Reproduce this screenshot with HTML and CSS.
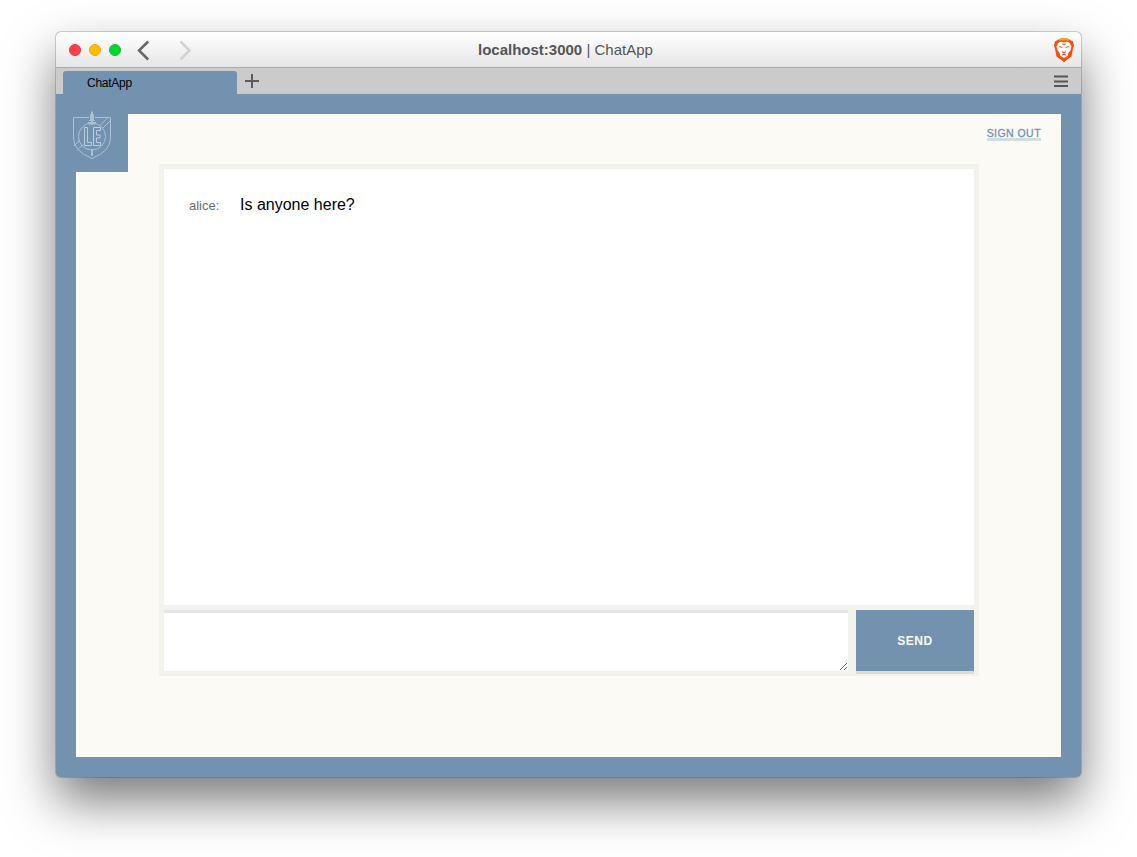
FILE: index.html
```html
<!DOCTYPE html>
<html lang="en">
<head>
<meta charset="utf-8">
<title>ChatApp</title>
<link rel="stylesheet" href="styles.css">
</head>
<body>
<div class="window">
  <header class="titlebar">
    <div class="controls">
      <span class="dot red"></span><span class="dot yellow"></span><span class="dot green"></span>
      <svg class="nav" width="60" height="24" viewBox="0 0 60 24" fill="none" stroke-width="2.5"><path d="M14.200 3.500 5 12.500l9.200 9" stroke="#666"/><path d="m46.500 3.500 9 9-9 9" stroke="#d2d2d2"/></svg>
    </div>
    <div class="address"><b>localhost:3000</b> | ChatApp</div>
    <svg class="brave" width="20" height="24" viewBox="0 0 20 24">
      <path d="M5.500 1h9L19 3.500l1 4-1 3-1.500 8L10 24l-7.500-5.500-1.500-8-1-3 1-4z" fill="#fb4c10"/>
      <path d="M6.500 0h7l2 2.500h-11z" fill="#eea335"/>
      <path d="m4.500 4.500 2.700-.8 2.800.8 2.800-.8 2.700.8 2 4-1 3.800-2 2.500-.8 3L10 20l-3.700-2.200-.8-3-2-2.500-1-3.800z" fill="#fff"/>
      <path d="m5 8.500 3.500 1M15 8.500l-3.500 1M8 13.500l2 1.300 2-1.300M8.300 5.800l1.700.8 1.700-.8M8 17l2-.8 2 .8" fill="none" stroke="#fb5b24" stroke-width="1.100"/>
    </svg>
  </header>
  <nav class="tabs">
    <div class="tab">ChatApp</div>
    <svg class="plus" width="14" height="14" viewBox="0 0 14 14"><path d="M7 0v14M0 7h14" stroke="#5c5c5c" stroke-width="2"/></svg>
    <svg class="menu" width="14" height="12" viewBox="0 0 14 12"><path d="M0 1.500h14M0 6.500h14M0 11h14" stroke="#555" stroke-width="2"/></svg>
  </nav>
  <main class="page">
    <div class="panel">
      <div class="chat">
        <div class="messages"><span class="author">alice:</span><span class="text">Is anyone here?</span></div>
        <form class="composer"><textarea class="input" aria-label="Message"></textarea><button class="send" type="button">SEND</button></form>
      </div>
      <a class="signout">SIGN OUT</a>
      <div class="logo">
        <svg width="40" height="50" viewBox="0 0 40 50" fill="none" stroke="#a9c1d3" stroke-width="1">
          <path d="M17 7.500H1.500V28q0 13 18.500 20.500Q38.500 41 38.500 28V7.500H23"/>
          <circle cx="20" cy="26.500" r="13.500"/>
          <path d="m28 15.500 8-8M31 18l7.500-7.500M2 36l6-6M5 40.500l6-6"/>
          <path d="M18.500 10V4.500h3V10M16 12.500h8M17 10.500h6M19.500 1.500h1M18.500 13l-1 2.500M21.500 13l1 2.500"/>
          <path d="M20 2v13M20 39v7" stroke-width="2"/>
          <path d="M12.500 17.500h3v15h4v3h-7zM21.500 17.500h7v3h-4v4.500h3.500v3h-3.500v4.500h4v3h-7z" stroke="#b9cedc"/>
        </svg>
      </div>
    </div>
  </main>
</div>
</body>
</html>
```
FILE: styles.css
```css
* { box-sizing: border-box; }
body {
  margin: 0;
  height: 857px;
  padding: 32px 56px 80px;
  overflow: hidden;
  background: #fff;
  font-family: "Liberation Sans", Arial, sans-serif;
}
.window {
  height: 745px;
  display: flex;
  flex-direction: column;
  border-radius: 5px;
  background: #7292b0;
  box-shadow: 0 0 0 1px rgba(0, 0, 0, .16), 0 24px 50px rgba(0, 0, 0, .53);
}
.titlebar {
  height: 36px;
  display: grid;
  grid-template-columns: 409px auto 1fr;
  align-items: center;
  padding: 0 7px 0 13px;
  border-bottom: 1px solid #aaa;
  border-radius: 5px 5px 0 0;
  background: linear-gradient(#fff, #e6e6e6);
}
.controls { display: flex; align-items: center; gap: 8px; }
.dot { width: 12px; height: 12px; border-radius: 50%; border: 1px solid; }
.red { background: #ff4248; border-color: #ee303c; }
.yellow { background: #ffbe00; border-color: #eaa715; }
.green { background: #00d831; border-color: #10bf30; }
.nav { margin-left: 5px; }
.address { color: #555; font-size: 15px; white-space: nowrap; }
.brave { justify-self: end; }
.tabs {
  height: 26px;
  display: flex;
  align-items: center;
  padding: 0 13px 0 7px;
  background: #cbcbcb;
}
.tab {
  align-self: flex-end;
  width: 174px;
  height: 23px;
  padding: 1px 0 0 24px;
  border-radius: 3px 3px 0 0;
  background: #7292b0;
  font-size: 12px;
  line-height: 22px;
  letter-spacing: -.25px;
}
.plus { margin-left: 8px; }
.menu { margin-left: auto; }
.page { flex: 1; padding: 20px; }
.panel { position: relative; height: 643px; padding: 50px 82px 0 83px; background: #fbfaf5; }
.chat { height: 512px; padding: 5px; background: #f3f3ed; }
.messages {
  height: 436px;
  display: flex;
  align-items: baseline;
  padding: 27px 25px;
  background: #fff;
}
.author { width: 51px; color: #6c6c6c; font-size: 13px; }
.text { color: #000; font-size: 16px; }
.composer { display: flex; gap: 8px; margin: 5px 0 0; }
.input {
  width: 684px;
  height: 61px;
  margin: 0;
  border: 0;
  border-top: 3px solid #e5e6e5;
  background: #fff;
  resize: both;
  outline: 0;
}
.send {
  width: 118px;
  height: 61px;
  padding: 0;
  border: 0;
  background: #7292b0;
  box-shadow: 0 3px #dcdbd8;
  color: #fcfbf5;
  font: bold 12px "Liberation Sans", Arial, sans-serif;
  letter-spacing: .6px;
}
.signout {
  position: absolute;
  top: 13px;
  right: 20px;
  height: 14px;
  border-bottom: 3px solid #d1dce3;
  color: #7292b0;
  font-size: 10.5px;
  line-height: 13px;
  letter-spacing: .45px;
  -webkit-text-stroke: .3px #7292b0;
}
.logo {
  position: absolute;
  top: -4px;
  left: -4px;
  width: 56px;
  height: 62px;
  background: #7292b0;
}
```
